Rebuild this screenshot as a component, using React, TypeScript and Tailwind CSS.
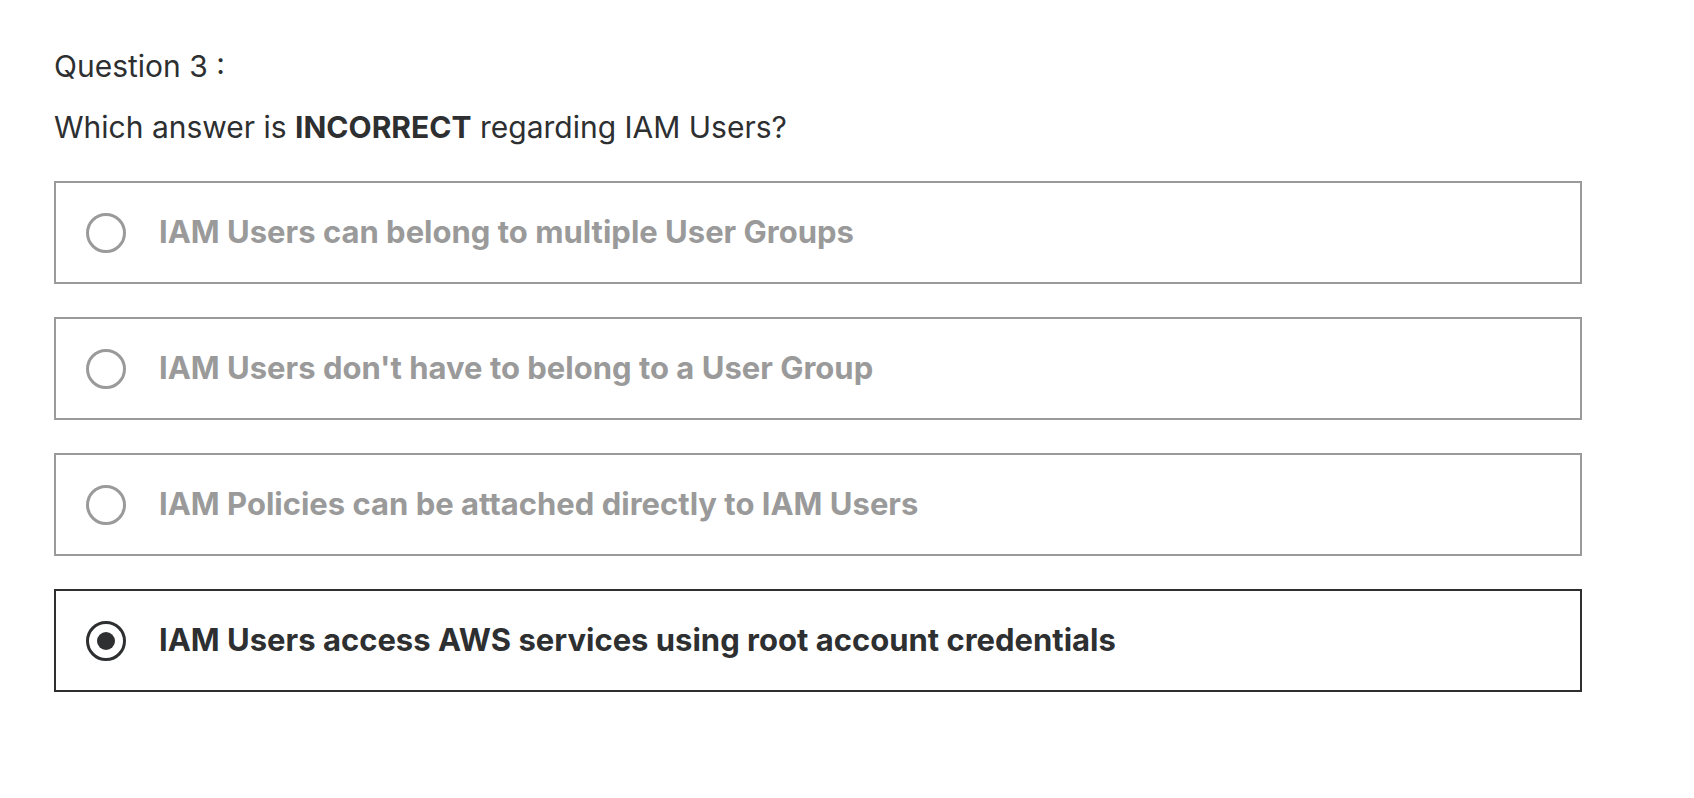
import { useState } from "react";

const options = [
    "IAM Users can belong to multiple User Groups",
    "IAM Users don't have to belong to a User Group",
    "IAM Policies can be attached directly to IAM Users",
    "IAM Users access AWS services using root account credentials",
];

function App() {
    const [selected, setSelected] = useState(3);

    return (
        <div className="min-h-screen bg-white pl-[54px] pt-[46px] text-[#2d2f31] font-['Inter','Liberation_Sans',sans-serif]">
            <p className="text-[30px] leading-[40px]">Question 3 :</p>
            <p className="mt-[21px] text-[30px] leading-[40px]">
                Which answer is <span className="font-bold">INCORRECT</span> regarding IAM Users?
            </p>
            <div className="mt-[34px] flex w-[1528px] flex-col gap-[33px]">
                {options.map((text, i) => {
                    const active = selected === i;
                    return (
                        <label
                            key={i}
                            onClick={() => setSelected(i)}
                            className={
                                active
                                    ? "flex h-[103px] cursor-pointer items-center border-2 border-[#2d2f31] pl-[30px]"
                                    : "flex h-[103px] cursor-pointer items-center border-2 border-[#9a9a9a] pl-[30px]"
                            }
                        >
                            <span
                                className={
                                    active
                                        ? "flex h-[40px] w-[40px] shrink-0 items-center justify-center rounded-full border-[3px] border-[#2d2f31]"
                                        : "flex h-[40px] w-[40px] shrink-0 items-center justify-center rounded-full border-[3px] border-[#9a9a9a]"
                                }
                            >
                                {active && <span className="h-[18px] w-[18px] rounded-full bg-[#2d2f31]" />}
                            </span>
                            <span
                                className={
                                    active
                                        ? "ml-[33px] text-[31px] font-bold text-[#2d2f31]"
                                        : "ml-[33px] text-[31px] font-bold text-[#9a9a9a]"
                                }
                            >
                                {text}
                            </span>
                        </label>
                    );
                })}
            </div>
        </div>
    );
}

export default App;
